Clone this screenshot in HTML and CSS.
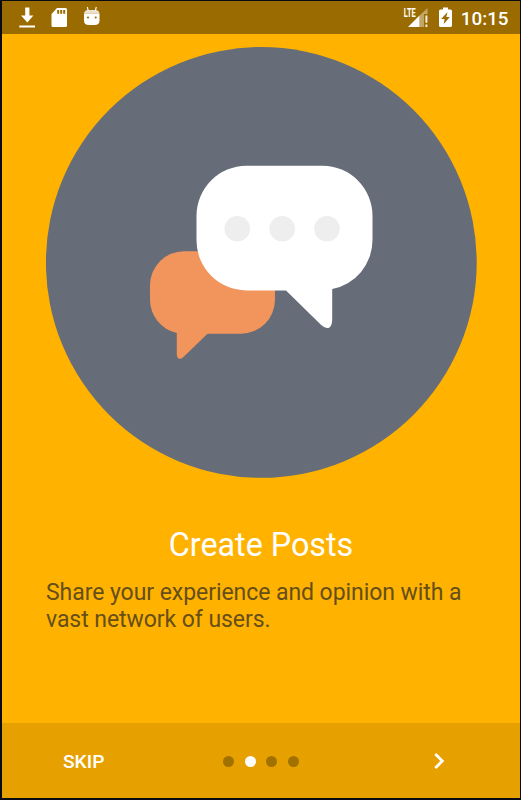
FILE: index.html
```
<!DOCTYPE html>
<html lang="en">
<head>
    <meta charset="UTF-8">
    <meta name="viewport" content="width=device-width, initial-scale=1.0">
    <title>Create Posts</title>
    <link rel="stylesheet" href="styles.css">
</head>
<body>
    <div class="screen">
        <header class="status-bar">
            <svg class="status-icons" width="96" height="32" viewBox="2 1 96 32" fill="#fff">
                <!-- download -->
                <path d="M25.200 7.500h4.200v8h4L27.300 22.500 21 15.500h4.200zM19.300 25.500h15.700v2h-15.700z"/>
                <!-- sd card -->
                <path fill-rule="evenodd" d="M57 8h8.500q1.500 0 1.500 1.500v16q0 1.500-1.500 1.500h-12.500q-1.500 0-1.500-1.500V14zM57.200 10v3.700h2V10zM60.200 10v3.700h2V10zM63.200 10v3.700h2V10z"/>
                <!-- android head -->
                <path d="M84 13.500h15.500v7q0 4.500-5 4.500h-5.500q-5 0-5-4.500z"/>
                <path d="M84 13.500q.5-3.500 4-3.500h7.500q3.500 0 4 3.500z" opacity=".8"/>
                <path d="M87.300 7l1 4M96.300 7l-1 4" stroke="#fff" stroke-width="1.100"/>
                <circle cx="88" cy="17.500" r="1.100" fill="#996b00"/>
                <circle cx="95.700" cy="17.500" r="1.100" fill="#996b00"/>
            </svg>
            <div class="status-right">
                <svg width="50" height="32" viewBox="403 1 50 32" fill="#fff">
                    <text class="lte" x="403.700" y="16.500" textLength="12" lengthAdjust="spacingAndGlyphs">LTE</text>
                    <path d="M408 27l11.500-11.500V27z"/>
                    <path d="M419.500 15.500L427.500 8v6h-3.500v13h-4.500z" opacity=".4"/>
                    <path d="M425.400 15.500h2v7.300h-2zM425.400 24.500h2V27h-2z" opacity=".9"/>
                    <!-- charging battery -->
                    <path fill-rule="evenodd" d="M443 7.500h5v2h2.500q1.500 0 1.500 1.500v14.500q0 1.500-1.500 1.500h-10q-1.500 0-1.500-1.500V11q0-1.500 1.500-1.500h2.500zM447.500 12l-6.300 7h3.300l-.7 5 6-7h-3.500z"/>
                </svg>
                <span class="clock">10:15</span>
            </div>
        </header>

        <main class="slide">
            <svg class="picture" width="431" height="431" viewBox="46 47 431 431">
                <circle cx="261.300" cy="262.400" r="215.400" fill="#666d78"/>
                <path fill="#f2955d" d="M184 251.200h57a34 34 0 0 1 34 34v14.500a34 34 0 0 1-34 34h-33.500L184 356.500c-4 4-7.200 2.500-7.200-2.500v-21A34 34 0 0 1 150 299.700v-14.500a34 34 0 0 1 34-34z"/>
                <path fill="#fff" d="M246.500 165.800h76a50 50 0 0 1 50 50V240.300a50 50 0 0 1-40.300 48.800V319c0 9.500-4.500 11.500-11 6L286 290.400h-39.500a50 50 0 0 1-50-50V215.800a50 50 0 0 1 50-50z"/>
                <g fill="#eee">
                    <circle cx="237.300" cy="228.800" r="12.800"/>
                    <circle cx="282.200" cy="228.800" r="12.800"/>
                    <circle cx="327" cy="228.800" r="12.800"/>
                </g>
            </svg>
            <h1>Create Posts</h1>
            <p>Share your experience and opinion with a vast network of users.</p>
        </main>

        <footer class="bottom-bar">
            <button class="skip">SKIP</button>
            <div class="dots">
                <span class="dot"></span>
                <span class="dot active"></span>
                <span class="dot"></span>
                <span class="dot"></span>
            </div>
            <button class="next" aria-label="Next">
                <svg width="12" height="18" viewBox="0 0 12 18">
                    <path d="M2.300 2l7 7-7 7" fill="none" stroke="#fff" stroke-width="2.800"/>
                </svg>
            </button>
        </footer>
    </div>
</body>
</html>
```

FILE: styles.css
```
* {
    box-sizing: border-box;
}

body {
    margin: 0;
    background: #06080c;
    font-family: Roboto, sans-serif;
    color: #fff;
}

.screen {
    display: flex;
    flex-direction: column;
    height: 800px;
    border: solid #080b12;
    border-width: 1px 1px 2px 2px;
    background: #ffb300;
}

.status-bar {
    display: flex;
    justify-content: space-between;
    height: 32.5px;
    padding-right: 11.5px;
    background: #996b00;
}

.status-icons {
    overflow: visible;
}

.status-right {
    display: flex;
    gap: 8px;
}

.status-right svg {
    margin-right: -0.5px;
}

.lte {
    font-size: 12px;
    font-weight: 700;
}

.clock {
    font-size: 18.8px;
    font-weight: 500;
    line-height: 36px;
}

.slide {
    flex: 1;
    padding: 13.5px 44px 0;
}

.picture {
    display: block;
}

h1 {
    margin: 48px 0 0;
    font-size: 32.3px;
    font-weight: 400;
    line-height: 38px;
    text-align: center;
}

p {
    margin: 15px -5px 0 0;
    font-size: 23px;
    line-height: 27px;
    letter-spacing: -0.06px;
    color: #664e1a;
}

.bottom-bar {
    display: grid;
    grid-template-columns: 1fr auto 1fr;
    align-items: center;
    height: 75px;
    padding: 1px 61px 0;
    background: #e6a100;
}

button {
    padding: 0;
    border: none;
    background: none;
    color: #fff;
    font-family: inherit;
    cursor: pointer;
}

.skip {
    font-size: 19.2px;
    font-weight: 500;
    text-align: left;
}

.dots {
    display: flex;
    gap: 10.6px;
}

.dot {
    width: 11px;
    height: 11px;
    border-radius: 50%;
    background: #a17100;
}

.dot.active {
    background: #fff;
}

.next {
    display: flex;
    justify-self: end;
    margin-right: 14px;
}
```
